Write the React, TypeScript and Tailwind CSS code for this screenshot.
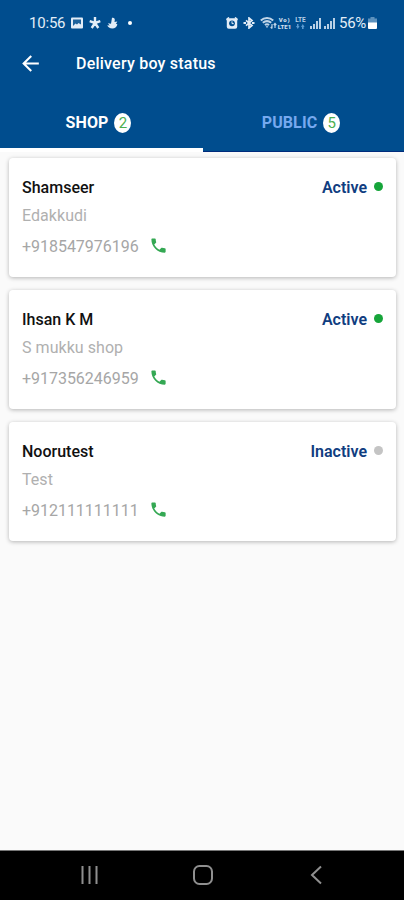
import { MdArrowBack, MdPhone } from "react-icons/md";

type DeliveryBoy = {
  name: string;
  place: string;
  phone: string;
  active: boolean;
};

const deliveryBoys: DeliveryBoy[] = [
  { name: "Shamseer", place: "Edakkudi", phone: "+918547976196", active: true },
  { name: "Ihsan K M", place: "S mukku shop", phone: "+917356246959", active: true },
  { name: "Noorutest", place: "Test", phone: "+912111111111", active: false },
];

function SignalIcon() {
  return (
    <svg viewBox="0 0 11 11" className="h-[11px] w-[11px]" fill="#b9d0e6">
      <path d="M0 8h2v3H0zM3 6h2v5H3zM6 3h2v8H6zM9 0h2v11H9z" />
    </svg>
  );
}

function StatusBar() {
  return (
    <div className="flex h-[46px] items-center pr-[27px] pl-[29px] text-[#e3edf7]">
      <span className="w-[42px] text-[15px] tracking-[-0.2px]">10:56</span>
      <svg viewBox="0 0 12 12" className="h-3 w-3">
        <rect y="0.5" width="12" height="11" rx="1" fill="#e3edf7" />
        <path d="M2 2.500h8v5L7.500 6 6 7.500 4.500 6.500 2 9z" fill="#1d629c" />
      </svg>
      <svg viewBox="0 0 12 12" className="ml-[6px] h-3 w-3" fill="none" stroke="currentColor" strokeWidth="2.4">
        <path d="M6 0v6M6 6L.7 4.2M6 6l5.3-1.8M6 6l-3.3 5M6 6l3.3 5" />
      </svg>
      <svg viewBox="0 0 11 12" className="ml-[6px] h-3 w-[11px]" fill="currentColor">
        <path d="M5 .8c2-.5 3 .7 2.800 2.300L7.500 5l2.700-.5c-.2 1-.8 1.700-1.400 2 .8.2 1.200.5 1.600 1.100-.8 2.600-2.500 3.900-5 3.900C2.700 11.500.8 10.300.3 8.300l2.500.3L.9 6.200 4 6.800z" />
      </svg>
      <span className="ml-[10px] h-1 w-1 rounded-full bg-white" />

      <div className="ml-auto flex items-center">
        <svg viewBox="0 0 12 12" className="h-3 w-3" fill="none">
          <path d="M.3 2.700L3 .5M11.700 2.700L9 .5" stroke="#e3edf7" strokeWidth="1.600" />
          <rect x="0.800" y="1.200" width="10.400" height="10.500" rx="2" fill="#e3edf7" />
          <circle cx="6" cy="6.300" r="2.900" fill="#004d8e" />
          <path d="M6 4.300v2.300h1.700" stroke="#e3edf7" />
        </svg>
        <svg viewBox="0 0 12 12" className="ml-[5px] h-3 w-3" fill="none" stroke="currentColor" strokeWidth="1.700">
          <path d="M3 3.300l6 5.200-3 2.500V1l3 2.500-6 5.200" />
          <path d="M.5 6h2.500M9 6h2.500" strokeWidth="2" />
        </svg>
        <svg viewBox="0 0 17 12" className="ml-[5px] h-3 w-[17px]" fill="none" stroke="#c0d5e8" strokeWidth="2">
          <path d="M.8 3.500c3.600-3.200 8.800-3.200 12.400 0M2.800 5.800c2.500-2 5.900-2 8.400 0M4.900 8c1.300-.9 2.900-.9 4.200 0" />
          <path d="M5.600 9.200h2.800L7 11z" fill="#c0d5e8" stroke="none" />
          <path d="M12 7v4.500M15 6.500V11M10.700 10l1.300 1.500M13.700 8L15 6.500l1.300 1.500" strokeWidth="1.200" />
        </svg>
        <span className="flex w-[15px] flex-col items-center text-[6px] leading-[7px] font-black text-[#cfdfed]">
          <span className="tracking-[0.7px]">Vo)</span>
          <span>LTE1</span>
        </span>
        <span className="ml-[2px] flex w-[13px] flex-col items-center text-[6.500px] leading-[7px] font-bold text-[#b9d0e6]">
          LTE
          <svg viewBox="0 0 9 5" className="h-[5px] w-[9px]" fill="#5b9ad0">
            <path d="M0 2h1V0h1.500v2h1L1.800 5zM5 3l1.800-3 1.800 3h-1v2H6V3z" />
          </svg>
        </span>
        <span className="ml-[3px] flex gap-[3px]">
          <SignalIcon />
          <SignalIcon />
        </span>
        <span className="ml-[4px] w-[29px] text-[15px] tracking-[-0.3px]">56%</span>
        <svg viewBox="0 0 9 12" className="h-3 w-[9px]">
          <path d="M2.500 0h4v1.500H9V7H0V1.500h2.500z" fill="#5c91bd" />
          <path d="M0 5.500h9V11a1 1 0 0 1-1 1H1a1 1 0 0 1-1-1z" fill="#fff" />
        </svg>
      </div>
    </div>
  );
}

function CountBadge({ count }: { count: number }) {
  return (
    <span className="flex h-5 w-[17px] items-center justify-center rounded-[50%] bg-white text-[15px] leading-5 font-normal tracking-normal text-[#4caf50]">
      {count}
    </span>
  );
}

function DeliveryCard({ boy }: { boy: DeliveryBoy }) {
  return (
    <div className="flex h-[119px] justify-between rounded-[4px] bg-white pt-[20px] pr-[13px] pl-[13px] shadow-[0_1px_4px_rgba(0,0,0,0.28)]">
      <div>
        <h2 className="text-[16px] leading-5 font-medium text-[#111111]">{boy.name}</h2>
        <p className="mt-2 text-[16px] leading-5 tracking-[0.05px] text-[#b0b0b0]">{boy.place}</p>
        <div className="mt-[10px] flex items-center">
          <span className="w-[127px] text-[16px] leading-5 tracking-[-0.03px] text-[#a6a6a6]">{boy.phone}</span>
          <MdPhone className="mb-[2px] h-[19px] w-[19px] text-[#34a853]" />
        </div>
      </div>
      <div className="flex h-5 items-center">
        <span className="text-[16px] font-semibold text-[#103d80]">{boy.active ? "Active" : "Inactive"}</span>
        {boy.active ? (
          <span className="mb-[3px] ml-[7px] h-[9px] w-[9px] rounded-full bg-[#16a53a]" />
        ) : (
          <span className="mb-[3px] ml-[7px] h-[9px] w-[9px] rounded-full bg-[#c4c4c4]" />
        )}
      </div>
    </div>
  );
}

export default function App() {
  return (
    <div className="flex h-[900px] w-[404px] flex-col overflow-hidden bg-[#fafafa] font-[Roboto,sans-serif]">
      <header className="h-[152px] bg-[#004d8e]">
        <StatusBar />
        <div className="flex h-[34px] items-center pl-[18px] text-white">
          <MdArrowBack className="h-[25px] w-[25px]" />
          <h1 className="mt-[2px] ml-[33px] text-[16px] font-medium tracking-[0.22px]">Delivery boy status</h1>
        </div>
        <div className="mt-[10px] flex h-[62px] text-[16px] font-bold tracking-[0.1px]">
          <div className="flex w-[203px] justify-center gap-[6px] border-b-[4px] border-white pt-[23px] pr-[6px] leading-5 text-white">
            SHOP
            <CountBadge count={2} />
          </div>
          <div className="flex flex-1 justify-center gap-[6px] border-b border-[#002c7c] pt-[23px] pr-[5px] leading-5 text-[#76a9ef]">
            PUBLIC
            <CountBadge count={5} />
          </div>
        </div>
      </header>

      <main className="flex flex-1 flex-col gap-[13px] pt-[6px] pr-2 pl-[9px]">
        {deliveryBoys.map((boy) => (
          <DeliveryCard key={boy.phone} boy={boy} />
        ))}
      </main>

      <nav className="flex h-[50px] items-center border-t border-[#777777] bg-black pl-[81px] text-[#8f8f8f]">
        <svg viewBox="0 0 18 20" className="mb-[2px] h-5 w-[18px]" stroke="currentColor" strokeWidth="2">
          <path d="M1.500 1v18M8.500 1v18M15.500 1v18" />
        </svg>
        <svg viewBox="0 0 20 20" className="mb-[2px] ml-[94px] h-5 w-5" fill="none" stroke="currentColor" strokeWidth="2">
          <rect x="1" y="1" width="18" height="18" rx="5.500" />
        </svg>
        <svg viewBox="0 0 12 20" className="mb-[2px] ml-[97px] h-5 w-3" fill="none" stroke="currentColor" strokeWidth="2">
          <path d="M11 1.500L2 10l9 8.500" />
        </svg>
      </nav>
    </div>
  );
}
